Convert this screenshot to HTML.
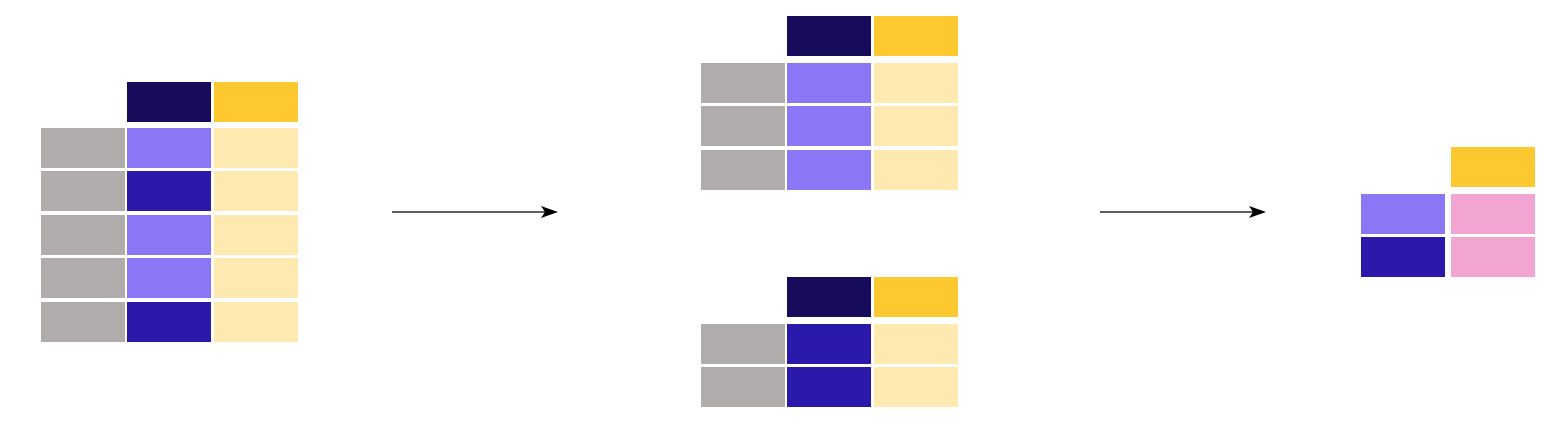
<!DOCTYPE html>
<html><head><style>
body{margin:0;width:1552px;height:436px;background:#fff;position:relative;overflow:hidden}
div{position:absolute;width:84px;height:40px}
.g{background:#b0acab}.n{background:#170b5b}.y{background:#fec830}.p{background:#8b77f5}.b{background:#2a19ab}.l{background:#fee9b0}.k{background:#f3a5d2}
</style></head><body>
<div class="n" style="left:127px;top:82px"></div><div class="y" style="left:214px;top:82px"></div>
<div class="g" style="left:41px;top:128px"></div><div class="p" style="left:127px;top:128px"></div><div class="l" style="left:214px;top:128px"></div>
<div class="g" style="left:41px;top:171px"></div><div class="b" style="left:127px;top:171px"></div><div class="l" style="left:214px;top:171px"></div>
<div class="g" style="left:41px;top:215px"></div><div class="p" style="left:127px;top:215px"></div><div class="l" style="left:214px;top:215px"></div>
<div class="g" style="left:41px;top:258px"></div><div class="p" style="left:127px;top:258px"></div><div class="l" style="left:214px;top:258px"></div>
<div class="g" style="left:41px;top:302px"></div><div class="b" style="left:127px;top:302px"></div><div class="l" style="left:214px;top:302px"></div>

<div class="n" style="left:787px;top:16px"></div><div class="y" style="left:874px;top:16px"></div>
<div class="g" style="left:701px;top:63px"></div><div class="p" style="left:787px;top:63px"></div><div class="l" style="left:874px;top:63px"></div>
<div class="g" style="left:701px;top:106px"></div><div class="p" style="left:787px;top:106px"></div><div class="l" style="left:874px;top:106px"></div>
<div class="g" style="left:701px;top:150px"></div><div class="p" style="left:787px;top:150px"></div><div class="l" style="left:874px;top:150px"></div>

<div class="n" style="left:787px;top:277px"></div><div class="y" style="left:874px;top:277px"></div>
<div class="g" style="left:701px;top:324px"></div><div class="b" style="left:787px;top:324px"></div><div class="l" style="left:874px;top:324px"></div>
<div class="g" style="left:701px;top:367px"></div><div class="b" style="left:787px;top:367px"></div><div class="l" style="left:874px;top:367px"></div>

<div class="y" style="left:1451px;top:147px"></div>
<div class="p" style="left:1361px;top:194px"></div><div class="k" style="left:1451px;top:194px"></div>
<div class="b" style="left:1361px;top:237px"></div><div class="k" style="left:1451px;top:237px"></div>

<svg width="1552" height="436" style="position:absolute;left:0;top:0">
<line x1="392" y1="212" x2="548" y2="212" stroke="#000" stroke-width="1.3"/>
<path d="M558 212 L541 206 L545 212 L541 218 Z" fill="#000"/>
<line x1="1100" y1="212" x2="1256" y2="212" stroke="#000" stroke-width="1.3"/>
<path d="M1266 212 L1249 206 L1253 212 L1249 218 Z" fill="#000"/>
</svg>
</body></html>
